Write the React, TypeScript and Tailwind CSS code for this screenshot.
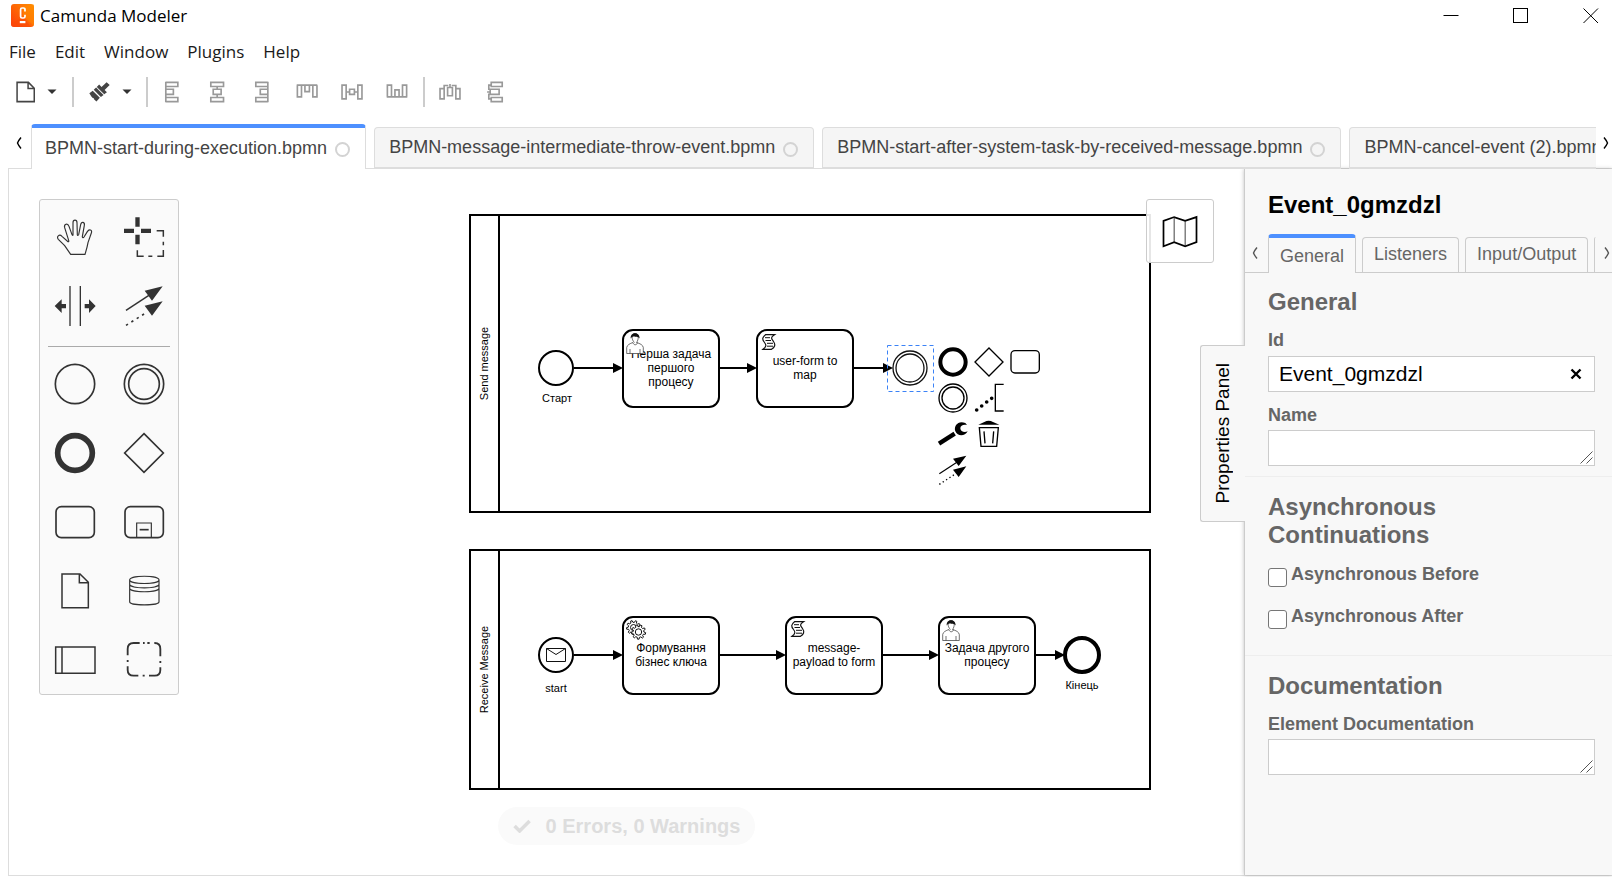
import type { ReactNode } from "react";

const INK = "#333333";

type GlyphProps = {
  box: string;
  className?: string;
  children: ReactNode;
};

function Glyph({ box, className, children }: GlyphProps) {
  return (
    <svg viewBox={box} className={className} aria-hidden="true" fill="none">
      {children}
    </svg>
  );
}

/* ---------- Title bar and menu ---------- */

function TitleBar() {
  return (
    <header className="flex h-8 items-center bg-white pr-[13px] pl-[11px]">
      <svg viewBox="0 0 24 24" className="h-6 w-6 shrink-0" aria-hidden="true">
        <defs>
          <linearGradient id="logo" x1="0" y1="1" x2="1" y2="0">
            <stop offset="0" stopColor="#fd3c0b" />
            <stop offset="1" stopColor="#ff8f00" />
          </linearGradient>
        </defs>
        <rect x="0" y="0" width="23" height="23" rx="3" fill="url(#logo)" />
        <path d="M12 3 L23 0.5 V22 L12 12 Z" fill="#ff8a00" opacity="0.55" />
        <path d="M0 20 L12 13 L20 23 H3 Q0 23 0 20Z" fill="#fa4a08" opacity="0.6" />
        <path
          d="M14 7.6 V5.6 Q14 4 12.4 4 H11 Q9.6 4 9.6 5.6 V12.4 Q9.6 14 11.1 14 H12.4 Q14 14 14 12.4 V10.8"
          fill="none"
          stroke="#fff"
          strokeWidth="1.7"
        />
        <rect x="8.8" y="17" width="5.6" height="2.2" fill="#fff" />
      </svg>
      <h1 className="ml-[5px] font-['Open_Sans','Noto_Sans',sans-serif] text-[17px] leading-6 text-black">
        Camunda Modeler
      </h1>
      <div className="ml-auto flex gap-[54px]">
        <button type="button" aria-label="Minimize" className="h-4 w-4">
          <Glyph box="0 0 16 16" className="h-4 w-4">
            <path d="M0.5 7.5 H15.5" stroke="#000" />
          </Glyph>
        </button>
        <button type="button" aria-label="Maximize" className="h-4 w-4">
          <Glyph box="0 0 16 16" className="h-4 w-4">
            <rect x="0.5" y="0.5" width="14" height="14" stroke="#000" />
          </Glyph>
        </button>
        <button type="button" aria-label="Close" className="h-4 w-4">
          <Glyph box="0 0 16 16" className="h-4 w-4">
            <path d="M0.5 0.5 L15 15 M15 0.5 L0.5 15" stroke="#000" />
          </Glyph>
        </button>
      </div>
    </header>
  );
}

function MenuBar() {
  return (
    <nav className="flex h-10 items-center gap-[19px] pl-[9px] font-['Open_Sans','Noto_Sans',sans-serif] text-[17px] leading-6 text-[#1a1a1a]">
      {["File", "Edit", "Window", "Plugins", "Help"].map((item) => (
        <button key={item} type="button">
          {item}
        </button>
      ))}
    </nav>
  );
}

/* ---------- Toolbar ---------- */

function Caret() {
  return (
    <Glyph box="0 0 10 6" className="h-[6px] w-[10px]">
      <path d="M0.5 0.5 H9.5 L5 5Z" fill="#333" />
    </Glyph>
  );
}

function AlignIcon({ box, d }: { box: string; d: string }) {
  return (
    <Glyph box={box} className="h-[22px] w-[22px]">
      <path d={d} stroke="#999" strokeWidth="4.8" />
    </Glyph>
  );
}

const alignTools = [
  {
    label: "Align left",
    box: "468 243 64 64",
    d: "M482 245.500 V305 M482 247 H517 V259 H482 M482 267 H504 V282 H482 M482 291 H517 V303 H482",
  },
  {
    label: "Align center",
    box: "599 243 64 64",
    d: "M613 247 H650 V259 H613Z M620 267 H643 V282 H620Z M613 291 H650 V303 H613Z M631.500 259 V267 M631.500 282 V291",
  },
  {
    label: "Align right",
    box: "733 243 64 64",
    d: "M782 245.500 V305 M782 247 H747 V259 H782 M782 267 H760 V282 H782 M782 291 H747 V303 H782",
  },
  {
    label: "Align top",
    box: "860 243 64 64",
    d: "M862 255 H922 M864 255 V289 H876 V255 M886 255 V274 H899 V255 M909 255 V289 H921 V255",
  },
  {
    label: "Align middle",
    box: "992 243 64 64",
    d: "M995 255 H1007 V295 H995Z M1041 255 H1053 V295 H1041Z M1017 267 H1031 V282 H1017Z M1007 275 H1017 M1031 275 H1041",
  },
  {
    label: "Align bottom",
    box: "1123 243 64 64",
    d: "M1125 289 H1185 M1127 289 V255 H1139 V289 M1149 289 V269 H1161 V289 M1171 289 V255 H1183 V289",
  },
];

const distributeTools = [
  {
    label: "Distribute horizontally",
    box: "1275 243 64 64",
    d: "M1278 265 H1290 V295 H1278Z M1324 265 H1336 V295 H1324Z M1300 262 H1314 V286 H1300Z M1290 267 V256 H1302 M1312 256 H1324 V267 M1307 252 V262",
  },
  {
    label: "Distribute vertically",
    box: "1406 243 64 64",
    d: "M1427 247 H1459 V259 H1427Z M1427 291 H1459 V303 H1427Z M1424 267 H1450 V282 H1424Z M1427 255 H1420 V267 H1424 M1427 295 H1420 V282 H1424 M1415 275 H1424",
  },
];

function Separator() {
  return <span className="h-[30px] w-[2px] shrink-0 bg-[#ccc]" />;
}

function Toolbar() {
  return (
    <div role="toolbar" aria-label="Editor actions" className="flex h-10 items-center pl-4">
      <button type="button" aria-label="New diagram" className="flex items-center gap-3">
        <Glyph box="46 243 55 64" className="h-[22px] w-[19px]">
          <path d="M49 247 H82 L99 264 V303 H49Z M81 247 V265 H99" stroke="#444" strokeWidth="4.400" />
        </Glyph>
        <Caret />
      </button>
      <span className="w-[15px]" />
      <Separator />
      <button type="button" aria-label="Set color" className="ml-[15px] flex items-center gap-3">
        <Glyph box="257 243 62 64" className="h-[22px] w-[21px]">
          <path d="M258 279 L268 271 L289 292 L279 303 L271 296 V293 L268 293 L264 288Z" fill="#444" />
          <path d="M271 268 L278 262 L300 284 L292 290Z" fill="#444" />
          <path d="M280 260 L287 253 L294 260 L309 246 L318 254 L303 269 L310 276 L302 282Z" fill="#444" />
        </Glyph>
        <Caret />
      </button>
      <span className="w-[14px]" />
      <Separator />
      <div className="ml-[13px] flex w-[247px] justify-between">
        {alignTools.map((tool) => (
          <button key={tool.label} type="button" aria-label={tool.label}>
            <AlignIcon box={tool.box} d={tool.d} />
          </button>
        ))}
      </div>
      <span className="w-[15px]" />
      <Separator />
      <div className="ml-[14px] flex gap-[23px]">
        {distributeTools.map((tool) => (
          <button key={tool.label} type="button" aria-label={tool.label}>
            <AlignIcon box={tool.box} d={tool.d} />
          </button>
        ))}
      </div>
    </div>
  );
}

/* ---------- File tabs ---------- */

const files = [
  "BPMN-start-during-execution.bpmn",
  "BPMN-message-intermediate-throw-event.bpmn",
  "BPMN-start-after-system-task-by-received-message.bpmn",
  "BPMN-cancel-event (2).bpmn",
];

function Chevron({ dir, color }: { dir: "left" | "right"; color: string }) {
  return (
    <Glyph box="0 0 6 12" className="h-3 w-[6px]">
      <path
        d={dir === "left" ? "M5 0.500 Q2.500 3.500 1.500 6 Q2.500 8.500 5 11.500" : "M1 0.500 Q3.500 3.500 4.500 6 Q3.500 8.500 1 11.500"}
        stroke={color}
        strokeWidth="1.400"
      />
    </Glyph>
  );
}

function FileTabs() {
  return (
    <div className="relative z-10 flex h-[57px] items-end">
      <button type="button" aria-label="Previous tabs" className="flex h-[52px] w-[31px] shrink-0 items-center justify-center pl-[7px]">
        <Chevron dir="left" color="#000" />
      </button>
      <div role="tablist" className="flex min-w-0 flex-1 items-end gap-2 overflow-hidden text-lg leading-6 text-[#444]">
        {files.map((file, index) => (
          <button
            key={file}
            type="button"
            role="tab"
            aria-selected={index === 0}
            className={
              index === 0
                ? "flex h-[45px] shrink-0 items-center gap-2 rounded-t border-x border-t-4 border-x-[#ddd] border-t-[#4d90ff] bg-white pr-[15px] pb-[2px] pl-[13px]"
                : "flex h-[42px] shrink-0 items-center gap-2 rounded-t border border-b-2 border-[#ddd] bg-[#f5f5f5] pr-[15px] pb-px pl-[14px]"
            }
          >
            <span className="whitespace-nowrap">{file}</span>
            <span className="mt-1 h-[15px] w-[15px] rounded-full border-2 border-[#d3d3d3]" />
          </button>
        ))}
      </div>
      <button type="button" aria-label="Next tabs" className="flex h-[52px] w-4 shrink-0 items-center justify-end pr-[3px]">
        <Chevron dir="right" color="#000" />
      </button>
    </div>
  );
}

/* ---------- Palette ---------- */

const paletteTools: { label: string; box: string; art: ReactNode }[] = [
  {
    label: "Hand tool",
    box: "96 71 138 138",
    art: (
      <path
        d="M152 192 L134 166 L115 147 C108 139 118 130 126 138 L144 154 C146 155 147 153 146 150 L134 112 C131 101 143 97 147 108 L156 133 C157 136 159 136 159 133 L159 97 C159 87 171 87 171 97 L172 133 C172 136 175 136 176 133 L182 103 C184 92 195 95 193 105 L187 139 C187 142 190 143 192 140 L202 124 C207 114 218 119 214 128 L204 157 C202 170 198 182 195 192Z"
        stroke={INK}
        strokeWidth="3.500"
      />
    ),
  },
  {
    label: "Lasso tool",
    box: "303 71 138 138",
    art: (
      <>
        <path d="M346 81h13v28h-13z M346 133h13v29h-13z M312 115h30v13h-30z M363 115h30v13h-30z" fill={INK} />
        <path d="M410 121 H430 V139 M430 154 V165 M430 179 V198 H412 M397 198 H385 M371 198 H352 V180" stroke={INK} strokeWidth="4.500" />
      </>
    ),
  },
  {
    label: "Create/remove space tool",
    box: "96 279 138 138",
    art: (
      <>
        <path d="M150 288 V408 M181 288 V408" stroke={INK} strokeWidth="4" />
        <path d="M104 348 L125 328 V342 H138 V355 H125 V369Z M227 348 L207 328 V342 H194 V355 H207 V369Z" fill={INK} />
      </>
    ),
  },
  {
    label: "Global connect tool",
    box: "303 279 138 138",
    art: (
      <>
        <path d="M318 361 L390 314" stroke={INK} strokeWidth="4.500" />
        <path d="M318 406 L380 367" stroke={INK} strokeWidth="5" strokeDasharray="7 12" />
        <path d="M428 289 L374 302 L396 332Z M428 334 L374 347 L396 377Z" fill={INK} />
      </>
    ),
  },
  { label: "Start event", box: "-69 -69 138 138", art: <circle r="59" stroke={INK} strokeWidth="5" /> },
  {
    label: "Intermediate event",
    box: "-69 -69 138 138",
    art: (
      <>
        <circle r="59" stroke={INK} strokeWidth="5" />
        <circle r="46" stroke={INK} strokeWidth="5" />
      </>
    ),
  },
  { label: "End event", box: "-69 -69 138 138", art: <circle r="52" stroke={INK} strokeWidth="17" /> },
  { label: "Gateway", box: "-69 -69 138 138", art: <path d="M0 -58 L58 0 L0 58 L-58 0Z" stroke={INK} strokeWidth="5" /> },
  {
    label: "Task",
    box: "-69 -69 138 138",
    art: <rect x="-57" y="-46" width="115" height="93" rx="16" stroke={INK} strokeWidth="5" />,
  },
  {
    label: "Expanded sub-process",
    box: "-69 -69 138 138",
    art: (
      <>
        <rect x="-57" y="-46" width="115" height="93" rx="16" stroke={INK} strokeWidth="5" />
        <path d="M-22 46 V3 H22 V46" stroke={INK} strokeWidth="3.500" />
        <path d="M-13 23 H14" stroke={INK} strokeWidth="5" />
      </>
    ),
  },
  {
    label: "Data object",
    box: "96 385 138 138",
    art: <path d="M126 403 H180 L205 428 V504 H126Z M178 403 V429 H205" stroke={INK} strokeWidth="4.500" />,
  },
  {
    label: "Data store",
    box: "303 385 138 138",
    art: (
      <path
        d="M329 421 C329 406 417 406 417 421 V486 C417 499 329 499 329 486Z M329 421 C329 435 417 435 417 421 M329 434 C329 448 417 448 417 434 M329 445 C329 460 417 460 417 445"
        stroke={INK}
        strokeWidth="3.500"
      />
    ),
  },
  {
    label: "Pool",
    box: "96 593 138 138",
    art: <path d="M107 623 H225 V702 H107Z M126 623 V702" stroke={INK} strokeWidth="4.500" />,
  },
  {
    label: "Group",
    box: "303 593 138 138",
    art: (
      <path
        d="M323 648 V629 Q323 611 341 611 H359 M369 611 H374 M382 611 H389 M403 611 H404 Q421 611 421 629 V651 M421 665 V671 M421 684 V692 Q421 709 404 709 H387 M374 709 H368 M355 709 H341 Q323 709 323 692 V681 M323 668 V662"
        stroke={INK}
        strokeWidth="5.500"
      />
    ),
  },
];

function Palette() {
  return (
    <div className="absolute top-[30px] left-[30px] rounded-[3px] border border-[#ccc] bg-[#fafafa] pt-[2px]">
      {[paletteTools.slice(0, 4), paletteTools.slice(4)].map((group, index) => (
        <div key={group[0].label}>
          {index === 1 && <hr className="mx-2 mt-[6px] mb-[2px] border-t border-[#aaa]" />}
          <div className="grid grid-cols-2">
            {group.map((tool) => (
              <button key={tool.label} type="button" aria-label={tool.label} className="flex h-[69px] w-[69px] items-center justify-center">
                <Glyph box={tool.box} className="h-[46px] w-[46px]">
                  {tool.art}
                </Glyph>
              </button>
            ))}
          </div>
        </div>
      ))}
    </div>
  );
}

/* ---------- Diagram ---------- */

function gear(cx: number, cy: number, outer: number, inner: number) {
  const teeth = 9;
  const points: string[] = [];
  for (let i = 0; i < teeth; i += 1) {
    const step = (Math.PI * 2) / teeth;
    const base = i * step;
    [
      [0, inner],
      [0.14, outer],
      [0.46, outer],
      [0.6, inner],
    ].forEach(([offset, radius]) => {
      const angle = base + offset * step;
      points.push(`${(cx + radius * Math.cos(angle)).toFixed(2)} ${(cy + radius * Math.sin(angle)).toFixed(2)}`);
    });
  }
  return `M${points.join(" L")}Z`;
}

function UserMark({ x, y }: { x: number; y: number }) {
  return (
    <g transform={`translate(${x} ${y})`}>
      <path
        d="M8.500 10.500 C5 7.500 5.500 1.500 9 1.500 C13 1.500 13 7.500 10.500 10.500 C14 11.500 17 13 17.300 15.500 V21.500 H0.700 V15.500 C1 13 4 11.500 7 10.500 C7.500 13.500 11 13.500 11.500 10.500 M4 17 V21.500 M14 17 V21.500"
        fill="#fff"
        stroke="#333"
        strokeWidth="0.700"
      />
      <path d="M4.700 6.500 C4 -0.500 14 -0.500 13.600 6.500 C12.500 4.500 11 5.500 9.500 4.800 C7.500 4.200 6 4.500 4.700 6.500Z" fill="#111" />
    </g>
  );
}

function ScriptMark({ x, y }: { x: number; y: number }) {
  return (
    <g transform={`translate(${x} ${y})`} fill="none" stroke="#111">
      <path
        d="M3.500 0.700 H12.500 C8 3.500 9.500 5 11.500 7.500 C14 11 12.500 13.500 9.500 15.300 H1 C4.500 12.500 4.500 11 2.500 8.500 C0 5.500 0 3.500 3.500 0.700Z"
        strokeWidth="1.200"
      />
      <path d="M3 3.700 H8 M3.500 6.500 H9 M5 9.300 H11 M5 12.200 H11" strokeWidth="1" />
    </g>
  );
}

function GearMark({ x, y }: { x: number; y: number }) {
  return (
    <g transform={`translate(${x} ${y})`} fill="#fff" stroke="#111" strokeWidth="1">
      <path d={gear(7.5, 7.5, 7, 5.2)} />
      <circle cx="7.5" cy="7.5" r="3" />
      <path d={gear(12.5, 12, 7.2, 5.4)} />
      <circle cx="12.5" cy="12" r="3.2" />
    </g>
  );
}

type TaskProps = { x: number; y: number; lines: string[]; mark: "user" | "script" | "service" };

function Task({ x, y, lines, mark }: TaskProps) {
  const firstLine = y + 49 - lines.length * 7;
  return (
    <g>
      <rect x={x} y={y} width="96" height="77" rx="10" fill="#fff" stroke="#000" strokeWidth="2" />
      <text textAnchor="middle" className="text-[12px]">
        {lines.map((line, index) => (
          <tspan key={line} x={x + 48} y={firstLine + index * 14}>
            {line}
          </tspan>
        ))}
      </text>
      {mark === "user" && <UserMark x={x + 3} y={y + 2} />}
      {mark === "script" && <ScriptMark x={x + 5} y={y + 4} />}
      {mark === "service" && <GearMark x={x + 3} y={y + 3} />}
    </g>
  );
}

function Flow({ from, to, y }: { from: number; to: number; y: number }) {
  return (
    <g>
      <path d={`M${from} ${y} H${to - 4}`} stroke="#000" strokeWidth="2" />
      <path d={`M${to} ${y} L${to - 10} ${y - 5} V${y + 5}Z`} fill="#000" />
    </g>
  );
}

function Pool({ y, height, name }: { y: number; height: number; name: string }) {
  return (
    <g>
      <path d={`M470 ${y} H1150 V${y + height} H470Z M499 ${y} V${y + height}`} fill="none" stroke="#000" strokeWidth="2" />
      <text transform={`translate(488 ${y + height / 2}) rotate(-90)`} textAnchor="middle" className="text-[11px]">
        {name}
      </text>
    </g>
  );
}

function Diagram() {
  return (
    <svg className="absolute inset-0 h-full w-full font-['Liberation_Sans',Arial,sans-serif]" role="img" aria-label="BPMN diagram">
      <g transform="translate(-9 -169)">
        <Pool y={215} height={297} name="Send message" />
        <Pool y={550} height={239} name="Receive Message" />

        <circle cx="556" cy="368" r="17" fill="#fff" stroke="#000" strokeWidth="2" />
        <text x="557" y="402" textAnchor="middle" className="text-[11px]">
          Старт
        </text>
        <Flow from={574} to={623} y={368} />
        <Task x={623} y={330} lines={["Перша задача", "першого", "процесу"]} mark="user" />
        <Flow from={719} to={757} y={368} />
        <Task x={757} y={330} lines={["user-form to", "map"]} mark="script" />
        <Flow from={853} to={893} y={368} />
        <circle cx="910" cy="368" r="17" fill="#fff" fillOpacity="0.9" stroke="#111" strokeWidth="1.300" />
        <circle cx="910" cy="368" r="14" fill="none" stroke="#111" strokeWidth="1.300" />
        <rect x="887.500" y="345.500" width="46" height="46" fill="none" stroke="#3b82f6" strokeDasharray="4 3" />

        <circle cx="556" cy="655" r="17" fill="#fff" stroke="#000" strokeWidth="2" />
        <path d="M546.500 648.500 H565.500 V661.500 H546.500Z L556 654.500 L565.500 648.500" fill="none" stroke="#111" />
        <text x="556" y="692" textAnchor="middle" className="text-[11px]">
          start
        </text>
        <Flow from={574} to={623} y={655} />
        <Task x={623} y={617} lines={["Формування", "бізнес ключа"]} mark="service" />
        <Flow from={719} to={786} y={655} />
        <Task x={786} y={617} lines={["message-", "payload to form"]} mark="script" />
        <Flow from={882} to={939} y={655} />
        <Task x={939} y={617} lines={["Задача другого", "процесу"]} mark="user" />
        <Flow from={1035} to={1065} y={655} />
        <circle cx="1082" cy="655" r="17" fill="#fff" stroke="#000" strokeWidth="4" />
        <text x="1082" y="689" textAnchor="middle" className="text-[11px]">
          Кінець
        </text>
      </g>
    </svg>
  );
}

const padRows: { label: string; box: string; art: ReactNode }[][] = [
  [
    { label: "Append end event", box: "-54 -54 108 108", art: <circle r="38" stroke="#000" strokeWidth="12" /> },
    { label: "Append gateway", box: "-54 -54 108 108", art: <path d="M0 -42 L42 0 L0 42 L-42 0Z" stroke="#000" strokeWidth="4" /> },
    {
      label: "Append task",
      box: "-54 -54 108 108",
      art: <rect x="-42" y="-34" width="85" height="67" rx="12" stroke="#000" strokeWidth="4" />,
    },
  ],
  [
    {
      label: "Append intermediate event",
      box: "-54 -54 108 108",
      art: (
        <>
          <circle r="42" stroke="#000" strokeWidth="4" />
          <circle r="33" stroke="#000" strokeWidth="4" />
        </>
      ),
    },
    {
      label: "Append text annotation",
      box: "362 178 108 108",
      art: (
        <>
          <path d="M460 191 H435 V271 H460" stroke="#000" strokeWidth="4" />
          <path d="M379 268h0.1 M394 256h0.1 M409 244h0.1 M424 233h0.1" stroke="#000" strokeWidth="11" strokeLinecap="round" />
        </>
      ),
    },
  ],
  [
    {
      label: "Change type",
      box: "254 288 108 108",
      art: (
        <>
          <path d="M266 371 L313 341" stroke="#000" strokeWidth="13" />
          <path d="M345 309 C325 300 309 316 315 334 C322 350 344 349 352 334 C342 339 330 334 330 325 C330 316 340 312 350 315Z" fill="#000" />
        </>
      ),
    },
    {
      label: "Remove",
      box: "362 288 108 108",
      art: (
        <>
          <path d="M384 314 L402 306 Q415 298 428 306 L447 314Z" fill="#000" />
          <path d="M387 323 H444 L439 379 H392Z M401 334 L404 370 M430 334 L427 370" stroke="#000" strokeWidth="4" />
        </>
      ),
    },
  ],
  [
    {
      label: "Connect",
      box: "254 394 108 108",
      art: (
        <>
          <path d="M267 459 L322 423" stroke="#000" strokeWidth="3.500" />
          <path d="M267 491 L318 458" stroke="#000" strokeWidth="4" strokeDasharray="4 8" />
          <path d="M348 405 L308 414 L325 436Z M348 437 L308 447 L325 469Z" fill="#000" />
        </>
      ),
    },
  ],
];

function ContextPad() {
  return (
    <div className="absolute top-[175px] left-[926px]">
      {padRows.map((row) => (
        <div key={row[0].label} className="flex">
          {row.map((action) => (
            <button key={action.label} type="button" aria-label={action.label} className="h-9 w-9">
              <Glyph box={action.box} className="h-9 w-9">
                {action.art}
              </Glyph>
            </button>
          ))}
        </div>
      ))}
    </div>
  );
}

function Canvas() {
  return (
    <section aria-label="Canvas" className="relative min-w-0 flex-1 overflow-hidden bg-white">
      <Diagram />
      <Palette />
      <ContextPad />
      <button
        type="button"
        aria-label="Open minimap"
        className="absolute top-[30px] right-[30px] flex h-16 w-[68px] items-center justify-center rounded-[3px] border border-[#ccc] bg-white/90"
      >
        <Glyph box="267 645 104 96" className="h-[33px] w-9">
          <path d="M271 662 L302 651 L334 662 L367 651 V724 L334 736 L302 724 L271 736Z" stroke="#000" strokeWidth="5" />
          <path d="M302 651 V724 M334 662 V736" stroke="#222" strokeWidth="2.500" />
        </Glyph>
      </button>
      <div
        role="status"
        className="absolute bottom-[30px] left-1/2 flex h-[38px] -translate-x-1/2 items-center rounded-full bg-[#fafafa] px-[15px] text-xl leading-6 font-bold whitespace-nowrap text-[#ddd]"
      >
        <Glyph box="0 0 18 14" className="mr-[15px] h-[14px] w-[18px]">
          <path d="M1.500 7 L6.500 12 L16.500 2" stroke="#ddd" strokeWidth="3.500" />
        </Glyph>
        0 Errors, 0 Warnings
      </div>
    </section>
  );
}

/* ---------- Properties panel ---------- */

function GroupTitle({ children }: { children: ReactNode }) {
  return <h3 className="text-2xl leading-7 font-bold text-[#666]">{children}</h3>;
}

function ResizableBox({ id, label }: { id: string; label: string }) {
  return (
    <div>
      <label htmlFor={id} className="block text-lg leading-6 font-bold text-[#666]">
        {label}
      </label>
      <div className="relative mt-[3px] h-9">
        <textarea id={id} rows={1} className="block h-9 w-full resize-none border border-[#ccc] bg-white px-[10px] outline-none" />
        <Glyph box="0 0 13 13" className="absolute right-[2px] bottom-[2px] h-[13px] w-[13px]">
          <path d="M0.500 12.500 L12.500 0.500 M6.500 12.500 L12.500 6.500" stroke="#555" />
        </Glyph>
      </div>
    </div>
  );
}

function CheckRow({ id, label }: { id: string; label: string }) {
  return (
    <div className="flex gap-1">
      <input
        id={id}
        type="checkbox"
        className="mt-[6px] h-[19px] w-[19px] appearance-none rounded-[3px] border border-[#767676] bg-white"
      />
      <label htmlFor={id} className="text-lg leading-6 font-bold text-[#666]">
        {label}
      </label>
    </div>
  );
}

function PropertiesPanel() {
  return (
    <aside className="relative w-[368px] shrink-0 border-l border-[#ccc] bg-[#f8f8f8] shadow-[0_0_4px_rgba(0,0,0,0.25)]">
      <button
        type="button"
        className="absolute top-[176px] -left-[45px] flex h-[177px] w-[45px] items-center justify-center rounded-l-[3px] border border-r-0 border-[#ccc] bg-[#f8f8f8]"
      >
        <span className="rotate-180 text-[19px] leading-6 text-black [writing-mode:vertical-rl]">Properties Panel</span>
      </button>

      <h2 className="px-[23px] pt-[22px] text-2xl leading-7 font-bold text-black">Event_0gmzdzl</h2>

      <div className="mt-[15px] flex h-[39px] items-end">
        <button type="button" aria-label="Previous groups" className="flex h-[39px] w-[23px] shrink-0 items-center justify-center border-b border-[#ccc] pr-1">
          <Chevron dir="left" color="#555" />
        </button>
        <div role="tablist" className="flex min-w-0 flex-1 items-end overflow-hidden text-lg leading-6 text-[#666]">
          <button type="button" role="tab" aria-selected="true" className="h-[39px] shrink-0 rounded-t border-x border-t-4 border-x-[#ccc] border-t-[#4d90ff] px-[11px]">
            General
          </button>
          {["Listeners", "Input/Output"].map((tab) => (
            <div key={tab} className="shrink-0 border-b border-[#ccc] pl-[6px]">
              <button type="button" role="tab" aria-selected="false" className="block h-[35px] rounded-t border border-b-0 border-[#ccc] px-[11px] pb-[2px]">
                {tab}
              </button>
            </div>
          ))}
          <div className="min-w-0 flex-1 border-b border-[#ccc] pl-[6px]">
            <button type="button" role="tab" aria-selected="false" aria-label="Extensions" className="block h-[35px] w-full rounded-tl border-l border-[#ccc]" />
          </div>
        </div>
        <button type="button" aria-label="Next groups" className="flex h-[39px] w-4 shrink-0 items-center justify-end border-b border-[#ccc] pr-[2px]">
          <Chevron dir="right" color="#555" />
        </button>
      </div>

      <section className="border-b border-[#eee] pt-[15px] pr-[17px] pb-[10px] pl-[23px]">
        <GroupTitle>General</GroupTitle>
        <label htmlFor="element-id" className="mt-3 block text-lg leading-6 font-bold text-[#666]">
          Id
        </label>
        <div className="mt-1 mb-[11px] flex h-9 items-center border border-[#ccc] bg-white pr-3 pl-[10px]">
          <input id="element-id" defaultValue="Event_0gmzdzl" className="min-w-0 flex-1 bg-transparent text-[21px] leading-7 text-black outline-none" />
          <button type="button" aria-label="Clear id">
            <Glyph box="0 0 12 12" className="h-3 w-3">
              <path d="M1.500 1.500 L10.500 10.500 M10.500 1.500 L1.500 10.500" stroke="#000" strokeWidth="2.400" />
            </Glyph>
          </button>
        </div>
        <ResizableBox id="element-name" label="Name" />
      </section>

      <section className="border-b border-[#eee] px-[23px] pt-4 pb-[26px]">
        <div className="w-[220px]">
          <GroupTitle>Asynchronous Continuations</GroupTitle>
        </div>
        <div className="mt-[13px] flex flex-col gap-[17px]">
          <CheckRow id="async-before" label="Asynchronous Before" />
          <CheckRow id="async-after" label="Asynchronous After" />
        </div>
      </section>

      <section className="pt-4 pr-[17px] pl-[23px]">
        <GroupTitle>Documentation</GroupTitle>
        <div className="mt-3">
          <ResizableBox id="element-documentation" label="Element Documentation" />
        </div>
      </section>
    </aside>
  );
}

export default function App() {
  return (
    <div className="flex min-h-screen flex-col bg-white pb-px font-['Liberation_Sans',Arial,sans-serif]">
      <TitleBar />
      <MenuBar />
      <Toolbar />
      <FileTabs />
      <main className="-mt-px ml-2 flex flex-1 border-t border-b border-l border-[#ddd]">
        <Canvas />
        <PropertiesPanel />
      </main>
    </div>
  );
}
